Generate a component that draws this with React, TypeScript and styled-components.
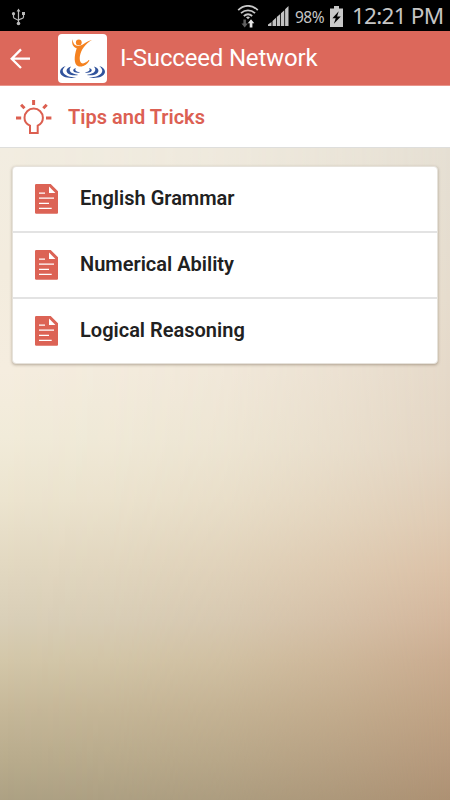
import React from "react";
import styled, { createGlobalStyle } from "styled-components";

const GlobalStyle = createGlobalStyle`
  * { box-sizing: border-box; }
  body { margin: 0; font-family: Roboto, "Noto Sans", sans-serif; }
`;

const Screen = styled.div`
  display: flex;
  flex-direction: column;
  width: 450px;
  height: 800px;
  overflow: hidden;
`;

const StatusBar = styled.div`
  display: flex;
  align-items: center;
  height: 31px;
  flex: none;
  background: #000;
  color: #c6c6c6;
  font-family: "Noto Sans", sans-serif;
  padding: 2px 6px 0 11px;
`;

const StatusIcons = styled.div`
  display: flex;
  align-items: center;
  margin-left: auto;
`;

const Signal = styled.div`
  display: flex;
  margin: 0 0 1px 9px;
`;

const BatteryText = styled.span`
  width: 31px;
  margin: 0 4px 0 6px;
  font-size: 15.5px;
  line-height: 20px;
  letter-spacing: -0.5px;
  white-space: nowrap;
`;

const Clock = styled.span`
  width: 92px;
  margin: -1px 0 0 9px;
  font-size: 22.5px;
  line-height: 28px;
  letter-spacing: -0.75px;
  white-space: nowrap;
`;

const AppBar = styled.header`
  display: flex;
  align-items: center;
  height: 55px;
  flex: none;
  padding-left: 8px;
  background: #dc685b;
  border-bottom: 1px solid #e9958b;
  color: #fff;
`;

const Logo = styled.div`
  width: 49px;
  height: 49px;
  margin-left: 26px;
  border-radius: 4px;
  background: #fff;
  overflow: hidden;
`;

const Title = styled.h1`
  margin: 0 0 0 13px;
  font-size: 24px;
  font-weight: 400;
  line-height: 30px;
  letter-spacing: -0.18px;
  white-space: nowrap;
`;

const Section = styled.div`
  display: flex;
  align-items: center;
  height: 62px;
  flex: none;
  padding-left: 16px;
  background: #fff;
  border-bottom: 1px solid #dededc;
`;

const SectionTitle = styled.h2`
  margin: 0 0 0 16px;
  color: #dc6053;
  font-size: 20px;
  font-weight: 600;
  line-height: 26px;
  white-space: nowrap;
`;

const Content = styled.main`
  position: relative;
  flex: 1;
  padding: 18px 12px;
  background: linear-gradient(180deg, #f2ede1 0, #f3ecde 120px, #f5eddf 222px, #f1ebd9 290px, #ece4cf 352px, #e3d9c2 412px, #d9cfb8 472px, #d3c7a9 512px, #c6b899 562px, #b9ac8d 612px, #ada184 652px);
  &::before {
    content: "";
    position: absolute;
    inset: 0;
    background: linear-gradient(180deg, #e5dfd3 0, #e6dccd 150px, #e5d9c9 222px, #e3d5c3 302px, #dfcbb4 372px, #dbc1a7 422px, #d3b69c 472px, #caac90 512px, #c0a385 562px, #b6997c 612px, #ad9173 652px);
    mask-image: linear-gradient(90deg, transparent 0, rgba(0, 0, 0, 0.08) 25%, rgba(0, 0, 0, 0.25) 50%, rgba(0, 0, 0, 0.58) 75%, #000 100%);
  }
`;

const List = styled.ul`
  position: relative;
  margin: 0;
  padding: 0;
  list-style: none;
  background: #fff;
  border: 1px solid #e6e2db;
  border-radius: 4px;
  box-shadow: 0 1px 3px rgba(70, 50, 30, 0.36);
`;

const Row = styled.li`
  display: flex;
  align-items: center;
  height: 66px;
  padding-left: 22px;
  gap: 22px;
  color: #212121;
  font-size: 20px;
  font-weight: 600;
  line-height: 26px;
  white-space: nowrap;
  border-bottom: 2px solid #e3e3e3;
  &:last-child { border-bottom: 0; height: 64px; }
`;

const RowLabel = styled.span`
  margin-top: -2px;
`;

const UsbIcon = () => (
  <svg width="15" height="18" viewBox="0 0 15 18" fill="none" stroke="#b9b9b9" strokeWidth="1.2">
    <path d="M7.5 2v13M2.5 6v3.3c0 2 5 1.5 5 4M12.5 6v3.2c0 2-5 1.4-5 3.5" />
    <path d="M5.6 3.5 7.5.5l1.9 3zM11 4h3v3h-3z" fill="#b9b9b9" stroke="none" />
    <circle cx="2.5" cy="5.7" r="1.6" fill="#b9b9b9" stroke="none" />
    <circle cx="7.5" cy="15.5" r="1.8" fill="#b9b9b9" stroke="none" />
  </svg>
);

const WifiIcon = () => (
  <svg width="22" height="24" viewBox="0 0 22 24" fill="none">
    <path d="M1.2 5.2C7-.6 15-.6 20.8 5.2M4 8.1c4.2-3.6 9.8-3.6 14 0M6.8 11c2.5-2.1 5.9-2.1 8.4 0" stroke="#c8c8c8" strokeWidth="1.8" />
    <path d="M9 12.3c1.3-1 2.7-1 4 0l-2 2z" fill="#c8c8c8" />
    <path d="M6.4 14.5h2.5v4h2l-3.2 4-3.2-4h1.9z" fill="#606060" />
    <path d="M14 14.2l3.3 4.1h-1.9v4.3h-2.7v-4.3h-1.9z" fill="#e5e5e5" />
  </svg>
);

const SignalIcon = () => (
  <svg width="21" height="20" viewBox="0 0 21 20" fill="#c3c3c3">
    <path d="M0 20v-1.5L3.5 16v4zM4.5 20v-5L8 11.8V20zM8.8 20v-9l3.4-2.9V20zM13 20V7.2l3.3-3V20zM17.1 20V3.3L20.5 0v20z" />
  </svg>
);

const BatteryIcon = () => (
  <svg width="13" height="21" viewBox="0 0 13 21" fill="#c8c8c8">
    <path d="M4 0h5v2.5h4V21H0V2.5h4z" />
    <path d="M8.7 5.2 2.4 12.2h3.3l-1.8 5.6 6.9-7.3H7.1z" fill="#000" />
  </svg>
);

const BackIcon = () => (
  <svg width="24" height="24" viewBox="0 0 24 24" fill="none" stroke="#fff" strokeWidth="2.3">
    <path d="M22 12.7H4M13 3.4 3.7 12.7l9.3 9.3" />
  </svg>
);

const LogoDrawing = () => (
  <svg width="49" height="49" viewBox="0 0 49 49" fill="none">
    <g fill="#f58220">
      <circle cx="20.8" cy="8.4" r="2.9" />
      <path d="M14.7 5.3c.1 3.2 1.2 5.5 3.5 6.3 2 .7 4.3.2 6.6-1.1 3.3-1.9 5.5-3.8 9.2-4.4-3.6 2.1-6 4.3-8.4 7.3-3.6 4.6-4.7 11-3.2 14.4.8 1.8 2.6 2.1 4.5 1l3-1.7-1.9 2.7c-2.1 2.6-5.2 3.4-7.8 2.4-4.6-2-4.2-9.8-1.5-18-3.6-.8-5.6-4.9-4-8.9z" />
    </g>
    <path d="M22.5 31.5c4.1.2 6.5-1.8 8.5-5.2" stroke="#f58220" strokeWidth="1.2" />
    <g fill="#31539c">
      <path d="M7.7 32C-.5 34.7.4 42 9.2 43.5c3.2.6 6.2.5 9-.1-3.1-.1-5.8-.4-8.2-1.2C3.9 40.2 3 35.6 7.7 32z" />
      <path d="M13.2 32.4c-6.3 1.6-6.1 6.9-.1 8.5 2.4.6 4.9.6 7.2 0-2.1-.3-4.1-.8-5.6-1.6-3.5-1.8-3.9-4.6-1.5-6.9z" />
      <path d="M18 34c-3.8.9-3.6 3.8.1 4.5 1.4.3 2.7.2 4-.1-4.1-.8-5.8-2.1-4.1-4.4z" />
      <path d="M41.3 32c8.2 2.7 7.3 10-1.5 11.5-3.2.6-6.2.5-9-.1 3.1-.1 5.8-.4 8.2-1.2 6.1-2 7-6.6 2.3-10.2z" />
      <path d="M35.8 32.4c6.3 1.6 6.1 6.9.1 8.5-2.4.6-4.9.6-7.2 0 2.1-.3 4.1-.8 5.6-1.6 3.5-1.8 3.9-4.6 1.5-6.9z" />
      <path d="M31 34c3.8.9 3.6 3.8-.1 4.5-1.4.3-2.7.2-4-.1 4.1-.8 5.8-2.1 4.1-4.4z" />
    </g>
  </svg>
);

const BulbIcon = () => (
  <svg width="36" height="36" viewBox="0 0 36 36" fill="none" stroke="#dc5f50">
    <path d="M14 34v-7.3C10.6 25.2 8.5 22.2 8.5 18.8a9.2 9.2 0 0 1 18.4 0c0 3.4-2 6.4-5.2 7.9V34z" strokeWidth="2" />
    <path d="M17.6 1v5M0 19h5.2M30 19h5.4M5.1 5.8l3.4 3.4M30.7 5.8l-3.4 3.4" strokeWidth="3" />
  </svg>
);

const DocumentIcon = () => (
  <svg width="23" height="30" viewBox="0 0 23 30">
    <path d="M1.2 0h14.5L23 7.2v21.6a1 1 0 0 1-1 1H1.2a1.2 1.2 0 0 1-1.2-1V1.2A1.2 1.2 0 0 1 1.2 0z" fill="#dc6355" />
    <path d="M14 2.5 20.4 9H14z" fill="#fff" />
    <path d="M4 9.2h6M4 14.2h15M4 19.3h10M4 24.3h12.7" stroke="#fff" strokeWidth="1.3" />
  </svg>
);

const topics = ["English Grammar", "Numerical Ability", "Logical Reasoning"];

export default function App() {
  return (
    <Screen>
      <GlobalStyle />
      <StatusBar>
        <UsbIcon />
        <StatusIcons>
          <WifiIcon />
          <Signal><SignalIcon /></Signal>
          <BatteryText>98%</BatteryText>
          <BatteryIcon />
          <Clock>12:21 PM</Clock>
        </StatusIcons>
      </StatusBar>
      <AppBar>
        <BackIcon />
        <Logo><LogoDrawing /></Logo>
        <Title>I-Succeed Network</Title>
      </AppBar>
      <Section>
        <BulbIcon />
        <SectionTitle>Tips and Tricks</SectionTitle>
      </Section>
      <Content>
        <List>
          {topics.map((topic) => (
            <Row key={topic}>
              <DocumentIcon />
              <RowLabel>{topic}</RowLabel>
            </Row>
          ))}
        </List>
      </Content>
    </Screen>
  );
}
